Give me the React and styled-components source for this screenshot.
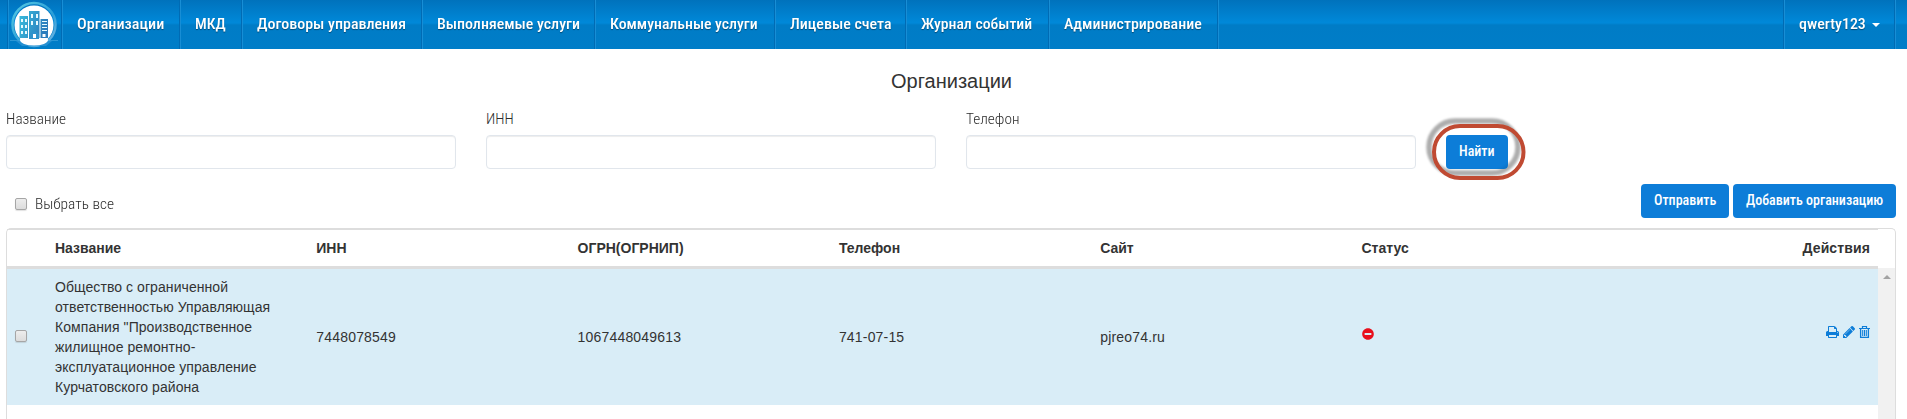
import React, { useLayoutEffect, useRef, useState } from 'react';
import styled, { createGlobalStyle } from 'styled-components';
import { FaMinusCircle } from 'react-icons/fa';

const Global = createGlobalStyle`
  * { box-sizing: border-box; }
  html, body { margin: 0; height: 419px; overflow: hidden; background: #fff; }
  body { font: 14px/20px "Liberation Sans", Arial, sans-serif; color: #333; }
`;

const Navbar = styled.nav`
  height: 49px;
  display: flex;
  padding-left: 7px;
  background: linear-gradient(#0072bc 0, #0088d8 22px, #0088d8 23px, #007cc6 25px, #007dc8 100%);
`;
const NavCell = styled.div`
  width: ${p => p.$w}px;
  padding-left: 15px;
  padding-bottom: 2px;
  flex: none;
  display: flex;
  align-items: center;
  border-left: 1px solid #006bb4;
  box-shadow: inset 1px 0 #188ed5;
`;
const LogoCell = styled(NavCell)`
  padding: 0 0 0 2px;
`;
const EndCell = styled(NavCell)`
  padding: 0;
`;
const Spacer = styled.div`
  flex: 1;
  border-left: 1px solid #006bb4;
  box-shadow: inset 1px 0 #188ed5;
`;
const Caret = styled.span`
  margin: 3px 0 0 6px;
  border: 4px solid transparent;
  border-top-color: #fff;
  border-bottom: 0;
`;

const FitBox = styled.span`
  display: inline-block;
  flex: none;
  width: ${p => p.$w}px;
  height: 20px;
  white-space: nowrap;
  text-align: left;
  line-height: 20px;
`;
const FitText = styled.span`
  display: inline-block;
  transform-origin: 0 50%;
  font-family: "Roboto Condensed", Roboto, sans-serif;
  font-stretch: 75%;
  font-size: ${p => p.$size}px;
  font-weight: ${p => p.$weight};
  color: ${p => p.$color};
  text-shadow: ${p => (p.$shadow ? '0 1px 1px rgba(0,0,0,.4)' : 'none')};
`;

/* Narrow label: squeezes the face horizontally to a given width. */
function Narrow({ w, size = 15, weight = 350, color = '#2b2b2b', shadow, children }) {
  const ref = useRef(null);
  const [k, setK] = useState(1);
  useLayoutEffect(() => { setK(w / ref.current.offsetWidth); }, [w]);
  return (
    <FitBox $w={w}>
      <FitText ref={ref} $size={size} $weight={weight} $color={color} $shadow={shadow}
        style={{ transform: `scaleX(${k})` }}>{children}</FitText>
    </FitBox>
  );
}

const Title = styled.h1`
  margin: 18px 0 0;
  padding-right: 4px;
  text-align: center;
  font-weight: 400;
  font-size: 20px;
  line-height: 28px;
`;
const Search = styled.form`
  display: flex;
  padding: 14px 0 0 6px;
`;
const Field = styled.label`
  width: 480px;
  display: flex;
  flex-direction: column;
`;
const Input = styled.input`
  width: 450px;
  height: 34px;
  margin-top: 6px;
  border: 1px solid #e1e6ec;
  border-radius: 4px;
  box-shadow: inset 0 1px 1px rgba(0,0,0,.075);
`;
const Button = styled.button`
  height: 34px;
  padding: 0 13px 2px;
  border: 0;
  border-radius: 4px;
  background: #0d7dd8;
`;
const FindWrap = styled.div`
  position: relative;
  padding-top: 26px;
  height: 60px;
`;
const Ring = styled.svg`
  position: absolute;
  left: -26px;
  top: 0;
  pointer-events: none;
`;
const Toolbar = styled.div`
  display: flex;
  align-items: flex-start;
  padding: 15px 11px 0 15px;
  height: 59px;
  gap: 4px;
`;
const SelectAll = styled.label`
  flex: 1;
  display: flex;
  align-items: center;
  gap: 8px;
  padding-top: 10px;
`;
const Check = styled.span`
  display: block;
  width: 12px;
  height: 12px;
  flex: none;
  border: 1px solid #a6a6a6;
  border-radius: 2px;
  background: linear-gradient(#ededed, #dcdcdc);
  box-shadow: 0 1px 1px rgba(0,0,0,.12);
`;

const Panel = styled.section`
  margin: 0 11px 0 6px;
  height: 191px;
  border: 1px solid #ddd;
  border-bottom: 0;
  border-radius: 5px 5px 0 0;
  display: grid;
  grid-template-columns: minmax(0, 1fr) 17px;
  grid-template-rows: 39px minmax(0, 1fr);
`;
const Row = styled.div`
  display: grid;
  grid-template-columns: 48px repeat(5, 261.3px) minmax(0, 1fr) 100px;
  align-items: center;
`;
const HeadRow = styled(Row)`
  font-weight: 700;
  border-top: 1px solid #ddd;
  border-bottom: 2px solid #ddd;
`;
const DataRow = styled(Row)`
  height: 137px;
  border-top: 1px solid #ddd;
  background: #d9edf7;
`;
const Cell = styled.div`
  letter-spacing: inherit;
`;
const NameCell = styled(Cell)`
  white-space: pre-line;
  letter-spacing: 0.07px;
`;
const ValueCell = styled(Cell)`
  padding-bottom: 1px;
  letter-spacing: 0.18px;
`;
const StatusCell = styled(Cell)`
  display: flex;
  padding: 0 0 6px 1px;
`;
const CheckCell = styled.div`
  padding: 0 0 2px 8px;
`;
const Actions = styled.div`
  display: flex;
  justify-content: flex-end;
  gap: 4px;
  padding: 0 8px 10px 0;
`;
const HeadActions = styled.div`
  text-align: right;
  padding-right: 8px;
  letter-spacing: 0.12px;
`;
const Scrollbar = styled.div`
  background: #f1f1f1;
  display: flex;
  justify-content: center;
  padding-top: 7px;
`;

const nav = [
  ['Организации', 87, 118], ['МКД', 31, 62], ['Договоры управления', 149, 180],
  ['Выполняемые услуги', 143, 173], ['Коммунальные услуги', 148, 180],
  ['Лицевые счета', 101, 131], ['Журнал событий', 111, 143], ['Администрирование', 138, 169],
];

const Logo = () => (
  <svg width="50" height="48" viewBox="0 0 50 48">
    <defs>
      <linearGradient id="lg" x2="1" y2="1">
        <stop offset="0" stopColor="#55c8e2" /><stop offset=".6" stopColor="#2a9ed8" /><stop offset="1" stopColor="#7bb9e4" />
      </linearGradient>
      <linearGradient id="bd" x2="1" y2=".3"><stop stopColor="#39bddd" /><stop offset="1" stopColor="#2b7dbd" /></linearGradient>
    </defs>
    <circle cx="24" cy="23.5" r="21.500" fill="none" stroke="url(#lg)" strokeWidth="2.5" />
    <circle cx="24" cy="24" r="19.500" fill="#fff" />
    <path d="M6 40H42L36 45H12Z" fill="#2590d2" />
    <path d="M0 39.500H48" stroke="#4aa9de" strokeWidth="1" opacity=".6" />
    <ellipse cx="24" cy="39" rx="14" ry="5.500" fill="#fff" />
    <path d="M9.500 15H18V37H9.500ZM19 10H29.500V37H19ZM30.500 18H38V37H30.500Z" fill="url(#bd)" />
    <path d="M11 18h2v3h-2zm4 0h2v3h-2zm-4 6h2v3h-2zm4 0h2v3h-2zm-4 6h2v3h-2zm4 0h2v3h-2zM21 13h2v4h-2zm5 0h2v4h-2zm-5 7h2v4h-2zm5 0h2v4h-2zM32 20h5v1h-5zm0 3h5v1h-5zm0 3h5v1h-5zm0 3h5v1h-5z" fill="#e6fafe" />
    <path d="M19 33L24 29.500L29 33V38H19Z" fill="#2f93cc" />
    <path d="M23 33h3v4h-3zM32.500 33h3v3h-3z" fill="#fff" />
  </svg>
);

const Printer = () => (
  <svg width="13" height="13" viewBox="0 0 1664 1664" fill="#0d7dd8">
    <path d="M384 1408h896v-256H384zM384 768h896V384h-160q-40 0-68-28t-28-68V128H384zM1536 832q0-26-19-45t-45-19-45 19-19 45 19 45 45 19 45-19 19-45zm128 0v416q0 13-9.500 22.500t-22.500 9.500h-224v160q0 40-28 68t-68 28H352q-40 0-68-28t-28-68v-160H32q-13 0-22.500-9.500T0 1248V832q0-79 56.500-135.500T192 640h64V96q0-40 28-68t68-28h672q40 0 88 20t76 48l152 152q28 28 48 76t20 88v256h64q79 0 135.500 56.500T1664 832z" fillRule="evenodd" />
  </svg>
);
const Pencil = () => (
  <svg width="12" height="12" viewBox="0 0 1515 1515" fill="#0d7dd8">
    <path d="M363 1387l91-91-235-235-91 91v107h128v128zM886 459q0-22-22-22-10 0-17 7L305 986q-7 7-7 17 0 22 22 22 10 0 17-7l542-542q7-7 7-17zM832 267l416 416-832 832H0v-416zM1515 363q0 53-37 90l-166 166L896 203l166-165q36-38 90-38 53 0 91 38l235 234q37 39 37 91z" fillRule="evenodd" />
  </svg>
);
const Trash = () => (
  <svg width="11" height="12" viewBox="0 0 11 12" fill="none" stroke="#0d7dd8">
    <path d="M0 2.500H11M3.500 2V.5H7.500V2" strokeWidth="1.200" />
    <path d="M1.600 3V11.300H9.400V3" strokeWidth="1.300" />
    <path d="M3.700 4V10M5.500 4V10M7.300 4V10" strokeWidth="1.050" />
  </svg>
);

export default function App() {
  return (
    <>
      <Global />
      <Navbar>
        <LogoCell $w={54}><Logo /></LogoCell>
        {nav.map(([label, tw, w]) => (
          <NavCell key={label} $w={w}><Narrow w={tw} size={15} weight={500} color="#fff" shadow>{label}</Narrow></NavCell>
        ))}
        <Spacer />
        <NavCell $w={111}><Narrow w={67} size={15} weight={500} color="#fff" shadow>qwerty123</Narrow><Caret /></NavCell>
        <EndCell $w={13} />
      </Navbar>
      <Title>Организации</Title>
      <Search>
        <Field><Narrow w={60}>Название</Narrow><Input /></Field>
        <Field><Narrow w={28}>ИНН</Narrow><Input /></Field>
        <Field><Narrow w={53}>Телефон</Narrow><Input /></Field>
        <FindWrap>
          <Button type="button"><Narrow w={36} size={14} weight={500} color="#fff">Найти</Narrow></Button>
          <Ring width="120" height="80" viewBox="0 0 120 80">
            <defs>
              <filter id="soft" x="-20%" y="-20%" width="140%" height="140%"><feGaussianBlur stdDeviation="1.3" /></filter>
              <mask id="outside"><path d="M0 0H120V80H0Z" fill="#fff" /><rect x="26" y="26" width="62" height="34" rx="4" fill="#000" fillOpacity=".75" /></mask>
            </defs>
            <g mask="url(#outside)">
              <rect x="9" y="12" width="89" height="52" rx="26" fill="none" stroke="#000" strokeOpacity=".32" strokeWidth="5.500" filter="url(#soft)" />
            </g>
            <rect x="14" y="17" width="89.500" height="52" rx="26" fill="none" stroke="#c04a32" strokeWidth="4" />
          </Ring>
        </FindWrap>
      </Search>
      <Toolbar>
        <SelectAll><Check /><Narrow w={79}>Выбрать все</Narrow></SelectAll>
        <Button><Narrow w={62} size={14} weight={500} color="#fff">Отправить</Narrow></Button>
        <Button><Narrow w={137} size={14} weight={500} color="#fff">Добавить организацию</Narrow></Button>
      </Toolbar>
      <Panel>
        <HeadRow>
          <span /><Cell>Название</Cell><Cell>ИНН</Cell><Cell>ОГРН(ОГРНИП)</Cell><Cell>Телефон</Cell><Cell>Сайт</Cell>
          <Cell>Статус</Cell><HeadActions>Действия</HeadActions>
        </HeadRow>
        <span />
        <div>
          <DataRow>
            <CheckCell><Check /></CheckCell>
            <NameCell>{'Общество с ограниченной\nответственностью Управляющая\nКомпания "Производственное\nжилищное ремонтно-\nэксплуатационное управление\nКурчатовского района'}</NameCell>
            <ValueCell>7448078549</ValueCell><ValueCell>1067448049613</ValueCell><ValueCell>741-07-15</ValueCell><ValueCell>pjreo74.ru</ValueCell>
            <StatusCell><FaMinusCircle color="#e8101c" size={12} /></StatusCell>
            <Actions><Printer /><Pencil /><Trash /></Actions>
          </DataRow>
        </div>
        <Scrollbar><svg width="8" height="4"><path d="M0 4L4 0L8 4Z" fill="#a3a3a3" /></svg></Scrollbar>
      </Panel>
    </>
  );
}
